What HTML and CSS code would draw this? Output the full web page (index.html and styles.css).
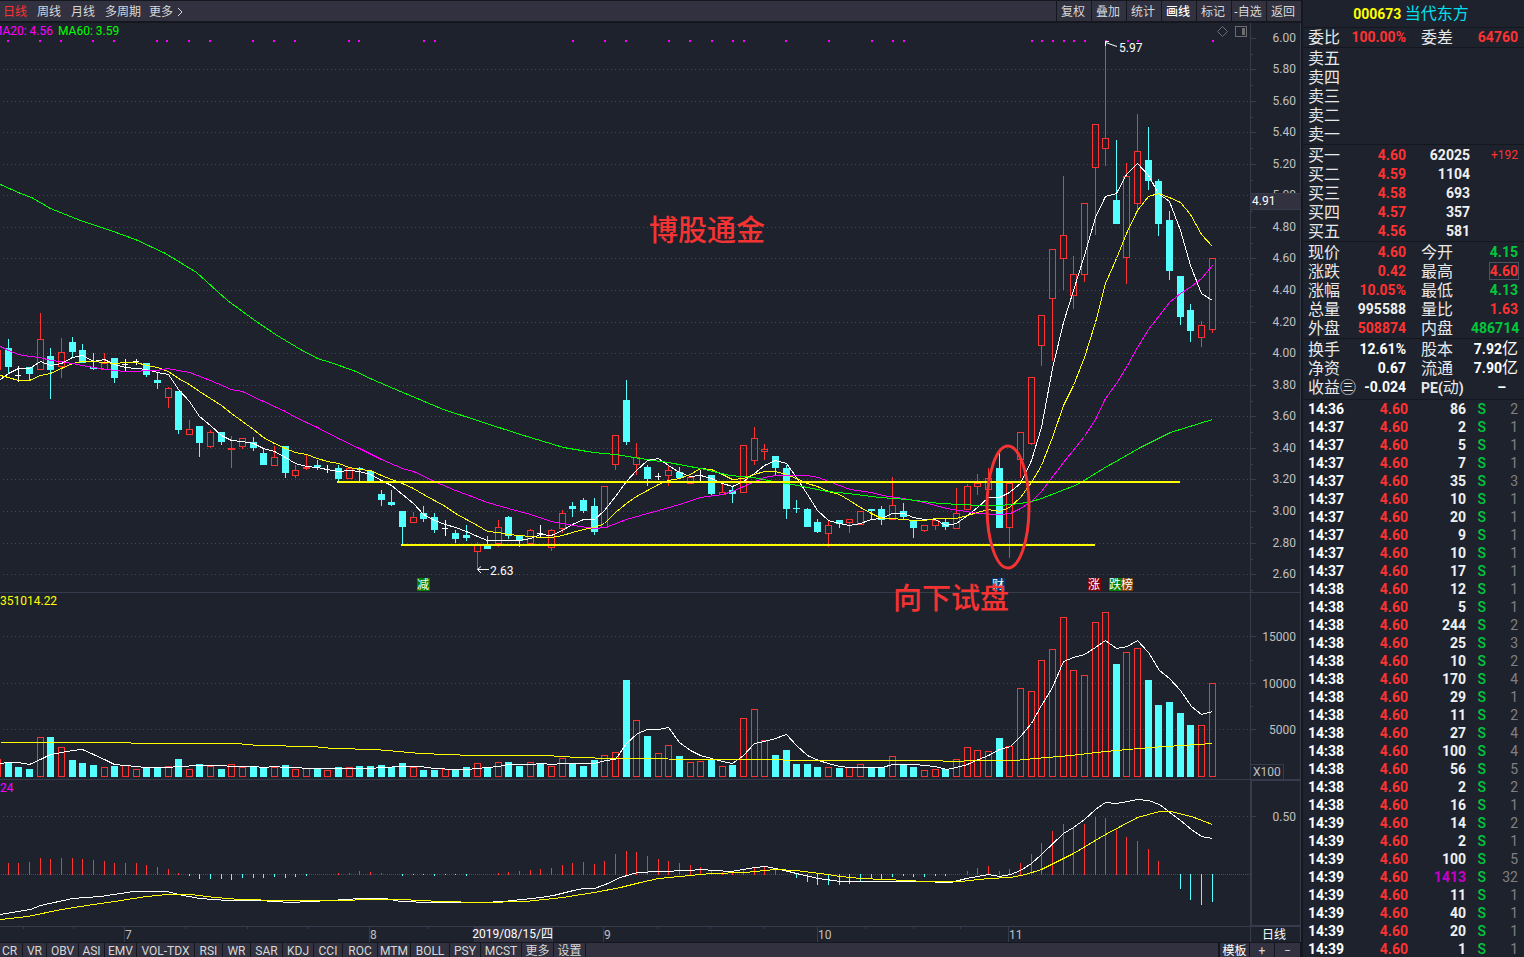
FILE: index.html
```html
<!DOCTYPE html>
<html lang="zh-CN">
<head>
<meta charset="utf-8">
<title>000673 当代东方</title>
<link rel="stylesheet" href="styles.css">
</head>
<body>
<div class="terminal">
  <main class="workspace">
    <header class="topbar">
      <nav class="periods">
        <button class="period period-active">日线</button>
        <button class="period">周线</button>
        <button class="period">月线</button>
        <button class="period">多周期</button>
        <button class="period period-more">更多<svg class="chevron" viewBox="0 0 6 10"><path d="M1 1l4 4-4 4"/></svg></button>
      </nav>
      <div class="tools">
        <button class="tool">复权</button>
        <button class="tool">叠加</button>
        <button class="tool">统计</button>
        <button class="tool tool-active">画线</button>
        <button class="tool">标记</button>
        <button class="tool">-自选</button>
        <button class="tool">返回</button>
      </div>
    </header>

    <svg class="panel panel-price" viewBox="0 23 1301 570">
      <g id="price-grid"></g>
      <path class="axis" d="M1250.5 23V593M1300.5 23V593M0 592.5H1301"/>
      <g id="price-labels"></g>
      <g id="signal-dots"></g>
      <g id="candles"></g>
      <g id="averages"></g>
      <text class="label magenta end" x="53" y="35">MA20: 4.56</text>
      <text class="label green" x="58" y="35">MA60: 3.59</text>
      <path class="icon" d="M1222.500 26.500l5 5-5 5-5-5z"/>
      <rect class="icon" x="1235.500" y="26.500" width="11" height="10" rx="1"/>
      <rect class="icon-fill" x="1242" y="28" width="3" height="7"/>
      <rect class="cursor-box" x="1251" y="193" width="50" height="16"/>
      <path class="axis" d="M1251 193.500H1301M1251 209.500H1301"/>
      <text class="label white" x="1252" y="205">4.91</text>
      <path class="support" d="M337 482H1180M401 545H1095"/>
      <path class="arrow" d="M1117 46.500L1105.500 42.500M1109 41.500H1105.500V46M1107 47"/>
      <text class="label white" x="1119" y="52">5.97</text>
      <path class="arrow" d="M489 569.500H477.500M481 566.500L477.500 569.500L481 573"/>
      <text class="label white" x="490" y="575">2.63</text>
      <rect class="tag-green" x="417" y="578" width="13" height="13"/>
      <text class="tag" x="423" y="589">减</text>
      <rect class="tag-blue" x="992" y="578" width="13" height="13"/>
      <text class="tag" x="998" y="589">财</text>
      <rect class="tag-red" x="1088" y="578" width="13" height="13"/>
      <text class="tag" x="1094" y="589">涨</text>
      <rect class="tag-green" x="1109" y="578" width="12" height="13"/>
      <rect class="tag-brown" x="1121" y="578" width="12" height="13"/>
      <text class="tag" x="1115" y="589">跌</text>
      <text class="tag" x="1127" y="589">榜</text>
      <ellipse class="marker" cx="1008" cy="507" rx="21" ry="61"/>
      <text class="note" x="649" y="241">博股通金</text>
      <text class="note" x="893" y="609">向下试盘</text>
    </svg>

    <svg class="panel" viewBox="0 593 1301 187">
      <path class="grid" d="M3 636.500H1250M3 683.500H1250M3 729.500H1250"/>
      <path class="axis" d="M1250.500 593V780M1300.500 593V780M0 779.500H1301M1251 636.500H1256M1251 683.500H1256M1251 729.500H1256M1251 660.500H1253M1251 706.500H1253M1251 764.500H1283.500V779"/>
      <g id="volumes"></g>
      <g id="volume-lines"></g>
      <text class="label yellow" x="0" y="605">351014.22</text>
      <text class="label end" x="1296" y="641">15000</text>
      <text class="label end" x="1296" y="688">10000</text>
      <text class="label end" x="1296" y="734">5000</text>
      <text class="label" x="1253" y="776">X100</text>
    </svg>

    <svg class="panel" viewBox="0 780 1301 147">
      <path class="grid" d="M3 816.500H1250"/>
      <path class="grid grid-zero" d="M1 874.500H1250"/>
      <path class="axis" d="M1250.500 780V927M0 926.500H1301M1252 816.500H1256"/>
      <rect class="axis" x="1251.500" y="780.500" width="49" height="145"/>
      <g id="macd-bars"></g>
      <g id="macd-lines"></g>
      <text class="label magenta" x="0" y="792">24</text>
      <text class="label end" x="1296" y="821">0.50</text>
    </svg>

    <svg class="panel" viewBox="0 927 1301 15">
      <path class="axis" d="M23.500 927v2M73.500 927v2M185.500 927v2M247.500 927v2M308.500 927v2M428.500 927v2M657.500 927v2M710.500 927v2M764.500 927v2M865.500 927v2M913.500 927v2M960.500 927v2"/>
      <path class="axis" d="M124.500 927v15M369.500 927v15M603.500 927v15M817.500 927v15M1008.500 927v15M1250.500 927v15M1300.500 927v15"/>
      <rect class="cursor-box" x="474" y="927" width="78" height="15"/>
      <path class="axis" d="M474.500 927v15M552.500 927v15"/>
      <text class="label" x="125" y="939">7</text>
      <text class="label" x="370" y="939">8</text>
      <text class="label white end" x="553" y="938">2019/08/15/四</text>
      <text class="label" x="604" y="939">9</text>
      <text class="label" x="818" y="939">10</text>
      <text class="label" x="1009" y="939">11</text>
      <text class="label white" x="1262" y="939">日线</text>
    </svg>

    <footer class="indicators">
      <button>CR</button><button>VR</button><button>OBV</button><button>ASI</button><button>EMV</button><button>VOL-TDX</button><button>RSI</button><button>WR</button><button>SAR</button><button>KDJ</button><button>CCI</button><button>ROC</button><button>MTM</button><button>BOLL</button><button>PSY</button><button>MCST</button><button>更多</button><button>设置</button>
      <span class="filler"></span>
      <button class="bright">模板</button><button>+</button><button>−</button>
    </footer>
  </main>

  <aside class="quote">
    <h1 class="stock"><span class="code">000673</span> <span class="name">当代东方</span></h1>
    <table class="facts">
      <tr><th>委比</th><td class="up">100.00%</td><th>委差</th><td class="up">64760</td></tr>
    </table>
    <table class="depth">
      <tr><th>卖五</th><td></td><td></td><td></td></tr>
      <tr><th>卖四</th><td></td><td></td><td></td></tr>
      <tr><th>卖三</th><td></td><td></td><td></td></tr>
      <tr><th>卖二</th><td></td><td></td><td></td></tr>
      <tr><th>卖一</th><td></td><td></td><td></td></tr>
    </table>
    <table class="depth">
      <tr><th>买一</th><td class="up">4.60</td><td>62025</td><td class="change">+192</td></tr>
      <tr><th>买二</th><td class="up">4.59</td><td>1104</td><td></td></tr>
      <tr><th>买三</th><td class="up">4.58</td><td>693</td><td></td></tr>
      <tr><th>买四</th><td class="up">4.57</td><td>357</td><td></td></tr>
      <tr><th>买五</th><td class="up">4.56</td><td>581</td><td></td></tr>
    </table>
    <table class="facts">
      <tr><th>现价</th><td class="up">4.60</td><th>今开</th><td class="down">4.15</td></tr>
      <tr><th>涨跌</th><td class="up">0.42</td><th>最高</th><td class="up"><span class="limit">4.60</span></td></tr>
      <tr><th>涨幅</th><td class="up">10.05%</td><th>最低</th><td class="down">4.13</td></tr>
      <tr><th>总量</th><td>995588</td><th>量比</th><td class="up">1.63</td></tr>
      <tr><th>外盘</th><td class="up">508874</td><th>内盘</th><td class="down">486714</td></tr>
    </table>
    <table class="facts facts-last">
      <tr><th>换手</th><td>12.61%</td><th>股本</th><td>7.92<span class="unit">亿</span></td></tr>
      <tr><th>净资</th><td>0.67</td><th>流通</th><td>7.90<span class="unit">亿</span></td></tr>
      <tr><th>收益㊂</th><td>-0.024</td><th><b>PE(</b>动<b>)</b></th><td class="none">–</td></tr>
    </table>
    <table class="ticks"><tbody id="ticks"></tbody></table>
  </aside>
</div>
<script src="chart.js"></script>
</body>
</html>
```

FILE: styles.css
```css
* { box-sizing: border-box; }

body {
  margin: 0;
  background: #1d222c;
  color: #c0c0c0;
  font-family: Roboto, "Liberation Sans", "Noto Sans CJK SC", sans-serif;
  font-size: 12px;
  overflow: hidden;
}

button {
  margin: 0;
  padding: 0;
  border: 0;
  background: none;
  color: #d8d8d8;
  font: inherit;
  white-space: nowrap;
}

.terminal {
  display: grid;
  grid-template-columns: minmax(0, 1fr) 223px;
  height: 100vh;
}

.workspace {
  display: flex;
  flex-direction: column;
  min-width: 0;
  overflow: hidden;
}

/* top bar */
.topbar {
  display: flex;
  flex: none;
  justify-content: space-between;
  height: 23px;
  border-top: 1px solid #14171e;
  border-bottom: 2px solid #14171e;
  background: #31313f;
}
.periods { display: flex; gap: 10px; padding-left: 3px; }
.period { padding-top: 2px; line-height: 18px; }
.period-more { display: flex; align-items: center; gap: 4px; margin-left: -2px; }
.period-active { color: #ff3232; }
.chevron { width: 6px; height: 10px; fill: none; stroke: #d8d8d8; }
.tools { display: flex; }
.tool { width: 35px; padding: 2px 2px 0 0; line-height: 18px; border-left: 1px solid #14171e; }
.tool-active { color: #fff; font-weight: 500; }

/* chart panels */
.panel { display: block; flex: none; width: 100%; height: auto; }
.panel-price { position: relative; z-index: 1; overflow: visible; }
.panel rect, .axis, .grid { shape-rendering: crispEdges; }
.axis { fill: none; stroke: #363c4b; }
.grid { fill: none; stroke: #454a59; stroke-dasharray: 1 3; }
.grid-zero { stroke-dasharray: 1 1; }
.label { fill: #c0c0c0; font-size: 12px; }
.end { text-anchor: end; }
.label.white { fill: #fff; }
.label.yellow { fill: #ff0; }
.label.magenta { fill: #f0f; }
.label.green { fill: #0f0; }
.line { fill: none; shape-rendering: crispEdges; }
.line-white { stroke: #fff; }
.line-yellow { stroke: #ff0; }
.line-magenta { stroke: #f0f; }
.line-green { stroke: #0f0; }
.dot { fill: #f0f; }
.rise { fill: none; stroke: #ff3232; }
.fall { fill: #54ffff; }
.rise-wick { fill: #ff3232; }
.flat { fill: #fff; }
.icon { fill: none; stroke: #6b6b70; }
.icon-fill { fill: #6b6b70; }
.cursor-box { fill: #31313f; }
.support { stroke: #ff0; stroke-width: 2; shape-rendering: crispEdges; }
.arrow { fill: none; stroke: #fff; }
.marker { fill: none; stroke: #f53333; stroke-width: 3; }
.note { fill: #f53333; font-size: 29px; font-weight: 500; }
.tag { fill: #fff; font-size: 12px; text-anchor: middle; }
.tag-green { fill: #008000; }
.tag-blue { fill: #003c70; }
.tag-red { fill: #800000; }
.tag-brown { fill: #804000; }

/* indicator bar */
.indicators {
  display: grid;
  flex: 1 0 15px;
  grid-template-columns: 23px 24px 32px 26px 32px 58px 28px 28px 32px 31px 29px 35px 33px 39px 31px 41px 32px 32px minmax(0, 1fr) 30px 25px 26px;
  border-top: 1px solid #14171e;
  background: #31313f;
}
.indicators button { padding-top: 2px; border-right: 1px solid #14171e; line-height: 12px; text-align: center; }
.indicators button:first-child { padding-right: 3px; }
.indicators .filler { border-right: 2px solid #14171e; }
.indicators .bright { color: #fff; }

/* quote column */
.quote {
  border-left: 2px solid #14171e;
  overflow: hidden;
}
.stock {
  margin: 0;
  height: 27px;
  padding-right: 5px;
  font-size: 14px;
  line-height: 28px;
  text-align: center;
}
.code { color: #ff0; }
.name { color: #00e0f0; font-size: 16px; font-weight: 400; }
.quote table {
  width: 100%;
  table-layout: fixed;
  border-collapse: separate;
  border-spacing: 0;
  border-top: 1px solid #14171e;
  padding: 0 6px 0 5px;
}
.quote td, .quote th { height: 19px; padding: 0; line-height: 19px; white-space: nowrap; }
.quote th { color: #e8e8e8; font-size: 16px; font-weight: 400; text-align: left; }
.quote td { color: #f0f0f0; font-size: 14px; font-weight: 700; text-align: right; }
.quote table + .depth, .quote .depth + .facts { padding-top: 1px; }
.facts th:nth-child(1) { width: 40px; }
.facts td:nth-child(2) { width: 58px; }
.quote .facts th:nth-child(3) { width: 65px; padding-left: 15px; }
.depth th { width: 47px; }
.depth td:nth-child(2) { width: 51px; }
.depth td:nth-child(3) { width: 64px; }
.quote .facts-last { padding-top: 1px; padding-bottom: 2px; }
.quote .facts-last td { color: #fff; }
.facts-last b { font-size: 14px; line-height: 0; }
.quote .up { color: #ff3232; }
.quote .down { color: #00c83c; }
.quote .change { color: #ff3232; font-size: 12px; font-weight: 400; }
.limit { outline: 1px solid #4a5464; }
.unit { font-size: 16px; font-weight: 400; line-height: 0; }
.quote .none { padding-right: 12px; }
.quote .ticks td { height: 18px; line-height: 18px; }
.quote .ticks td:nth-child(1) { width: 47px; text-align: left; color: #fff; }
.quote .ticks td:nth-child(2) { width: 53px; color: #ff3232; }
.quote .ticks td:nth-child(3) { width: 58px; }
.quote .ticks td:nth-child(4) { width: 20px; color: #00c83c; font-weight: 500; }
.quote .ticks td:nth-child(5) { color: #808080; font-weight: 400; }
.quote .ticks .large { color: #c800c8; }
```

FILE: chart.js
```js
const NS = 'http://www.w3.org/2000/svg';
const byId = (id) => document.getElementById(id);
const xAt = (i) => Math.floor(8.2 + 10.655 * i);

function add(parent, tag, attrs, text) {
  const el = document.createElementNS(NS, tag);
  for (const key in attrs) el.setAttribute(key, attrs[key]);
  if (text !== undefined) el.textContent = text;
  parent.appendChild(el);
}
function box(parent, cls, x, y, width, height) {
  add(parent, 'rect', { class: cls, x, y, width, height: Math.max(height, 1) });
}
function line(parent, color, points) {
  const d = points.map((p) => (p[0] + 0.5) + ',' + (p[1] + 0.5)).join(' ');
  add(parent, 'polyline', { class: 'line line-' + color, points: d });
}
const pairs = (text) => text.trim().split(/\s+/).map((p) => p.split(',').map(Number));
const series = (first, text) => [[0, first]].concat(text.trim().split(/\s+/).map((y, i) => [xAt(i), Number(y)]));

/* price scale */
for (let k = 0; k < 18; k++) {
  const y = Math.floor(38 + 31.57 * k);
  if (k > 0) add(byId('price-grid'), 'path', { class: 'grid', d: `M3 ${y + 0.5}H1250` });
  add(byId('price-grid'), 'path', { class: 'axis', d: `M1251 ${y + 0.5}h5M1251 ${y + 16.5}h2` });
  add(byId('price-labels'), 'text', { class: 'label end', x: 1296, y: y + 4 }, (6 - 0.2 * k).toFixed(2));
}

for (const x of [7, 39, 60, 92, 113, 156, 166, 188, 209, 252, 273, 294, 348, 358, 423, 434, 572, 604, 625, 668, 689, 711, 732, 743, 785, 828, 871, 892, 903, 1031, 1041, 1052, 1063, 1073, 1084, 1105, 1127, 1137, 1212]) {
  box(byId('signal-dots'), 'dot', x, 40, 2, 2);
}

/* kind, high, body top, body bottom, low; starts one bar left of the view */
const candles = `
r,350,350,370,370 c,339,348,367,374 x,366,375,376,382 c,367,367,374,380 r,313,339,370,370 c,348,356,370,399
r,338,352,367,378 c,337,342,352,357 c,344,350,363,363 c,353,367,369,370 r,353,363,370,370 c,358,358,378,383
x,359,364,365,371 x,359,361,362,365 c,363,363,375,377 c,373,380,383,389 r,387,388,398,408 c,391,391,430,434
r,420,429,435,435 c,426,426,443,457 r,430,432,447,448 c,432,432,442,445 r,436,448,450,468 r,438,438,447,449
c,437,442,448,451 c,449,453,465,465 r,446,457,466,466 c,446,446,473,478 r,465,470,476,478 r,454,467,469,470
c,460,465,467,470 x,465,469,470,473 c,465,468,479,481 r,467,468,479,479 c,467,468,469,481 c,471,471,482,482
c,490,494,500,506 c,490,502,505,506 c,511,511,527,544 r,512,517,523,523 c,506,513,519,522 c,513,517,530,533
x,520,528,529,536 c,530,533,539,543 c,525,535,538,541 r,542,545,552,569 c,536,546,549,549 r,520,527,544,547
c,516,517,536,539 c,536,536,541,547 r,529,530,544,544 x,525,533,534,537 r,529,530,548,551 r,510,513,529,533
c,502,506,509,517 c,498,500,511,513 c,498,506,532,535 r,486,486,528,528 r,435,435,465,470 c,380,400,442,445
r,443,457,465,475 c,465,467,479,486 x,473,476,477,480 r,466,470,476,486 c,467,472,478,479 r,477,477,484,484
x,470,475,476,482 c,475,475,494,495 r,483,492,495,495 c,486,490,494,503 r,445,445,493,493 r,427,438,461,465
r,444,449,452,460 c,456,456,468,475 c,465,468,509,519 c,500,508,509,513 c,508,509,527,527 c,519,522,532,533
r,520,525,534,547 c,520,520,524,528 r,519,519,523,533 r,511,511,525,525 c,509,509,511,519 c,506,509,520,525
r,477,505,520,520 c,503,511,517,520 c,520,520,528,538 r,525,525,531,532 r,520,520,526,530 c,519,522,527,530
r,488,513,529,529 r,484,486,510,510 r,474,483,487,495 r,468,478,490,493 c,453,468,528,528 r,483,483,528,558
r,432,432,460,478 r,377,377,444,445 r,315,315,346,366 r,249,249,299,361 r,176,235,259,290 r,256,274,296,309
r,203,203,275,282 r,124,124,168,235 r,42,138,149,166 c,140,200,224,224 r,163,176,258,284 r,114,151,204,212
c,127,160,181,190 c,179,181,224,236 c,211,220,271,280 c,276,276,317,325 c,304,310,331,342 r,321,325,338,347
r,258,258,330,333`.trim().split(/\s+/).map((c) => c.split(','));

candles.forEach(([kind, high, top, bottom, low], n) => {
  const g = byId('candles');
  const x = xAt(n - 1);
  [high, top, bottom, low] = [high, top, bottom, low].map(Number);
  if (kind === 'r') {
    if (top > high) box(g, 'rise-wick', x, high, 1, top - high);
    if (low > bottom) box(g, 'rise-wick', x, bottom, 1, low - bottom);
    box(g, 'rise', x - 2.5, top + 0.5, 6, bottom - top - 1);
  } else {
    const cls = kind === 'c' ? 'fall' : 'flat';
    box(g, cls, x, high, 1, low - high);
    box(g, cls, x - 3, top, kind === 'c' ? 7 : 6, bottom - top);
  }
});

line(byId('averages'), 'white', series(379, `
373 368 368 361 365 363 357 355 361 359 364 367 368 369 372 374 389 401 416 425 435 440 441 443 448 451 457 463 466 467 469
471 470 471 474 480 485 494 503 514 520 524 527 531 536 540 540 540 540 538 534 535 530 524 519 519 510 496 481 470 460
458 465 472 476 475 478 483 486 481 473 465 460 463 477 494 510 520 523 525 523 519 518 513 513 517 519 519 525 523 515
507 497 497 492 483 460 427 368 322 290 255 217 196 193 174 163 175 193 201 230 265 293 300`));
line(byId('averages'), 'yellow', series(375, `
377 380 380 375 373 368 363 361 361 362 363 362 362 365 367 371 378 384 391 398 405 413 421 429 437 443 448 452 454 458 461
463 467 469 470 475 479 483 488 494 500 506 513 519 525 531 532 534 535 536 537 537 535 532 529 527 523 512 503 496 490
484 480 478 474 468 469 474 479 478 474 471 471 474 478 483 486 491 494 500 507 513 518 518 519 520 520 518 518 518 515
512 509 511 507 497 482 465 437 405 385 357 322 283 258 233 210 196 193 197 202 214 234 246`));
line(byId('averages'), 'magenta', pairs(`
0,346 8,350 18,354 29,356 40,357 50,360 61,361 82,365 93,367 114,370 125,371 157,370 167,368 189,372 210,380 231,389 242,391
263,401 285,411 295,417 317,427 338,438 359,448 381,459 402,468 413,471 434,481 455,490 466,494 487,502 508,508 530,514
551,521 573,525 594,528 605,527 626,519 647,513 658,510 679,504 700,497 722,494 732,491 743,486 764,477 775,475 807,475
818,477 828,481 850,489 871,492 882,495 903,498 924,502 946,508 978,513 999,514 1010,513 1020,508 1031,501 1041,491
1063,462 1084,436 1095,419 1105,398 1116,383 1127,365 1137,347 1148,329 1159,315 1169,302 1180,293 1191,286 1201,278 1212,265`));
line(byId('averages'), 'green', pairs(`
0,184 20,193 31,197 50,208 80,220 110,230 135,239 165,253 196,272 227,300 253,319 275,334 300,349 317,358 330,362 353,370
372,379 400,391 443,409 520,434 563,447 593,452 615,454 633,457 660,461 668,462 700,468 730,475 753,477 773,481 797,485
827,491 847,493 880,497 907,499 940,503 980,505 999,505 1020,503 1031,501 1041,498 1077,484 1103,468 1140,447 1170,432 1212,419`));

/* volume: kind and top edge, base at 776 */
const volumes = `
r759 c763 c767 c769 r737 c737 r747 c760 c763 c765 r767 c766 r765 r769 c768 c768 r766 c759 r769 c764 r766 c769 r764 r767 c767
c768 r767 c765 r769 r768 c769 r770 c767 r767 c766 c766 c765 c767 c763 r767 c770 c770 r769 c770 c767 r763 c767 r762 c762 c766
r762 c764 r766 r758 c764 c766 c760 r755 r752 c680 r720 c736 r753 r745 c756 r762 r761 c760 r766 c765 r718 r709 r740 c755 c750
c764 c764 c767 r767 c768 r767 r764 c767 c767 r756 c765 c767 r770 r769 c769 r759 r747 r750 r751 c738 r746 r688 r691 r660 r649
r617 r670 r675 r622 r612 c664 r652 r648 c680 c705 c702 c713 c725 r725 r683`.trim().split(/\s+/);
volumes.forEach((v, n) => {
  const x = xAt(n - 1);
  const top = Number(v.slice(1));
  if (v[0] === 'c') box(byId('volumes'), 'fall', x - 3, top, 7, 777 - top);
  else box(byId('volumes'), 'rise', x - 2.5, top + 0.5, 6, 776 - top);
});
line(byId('volume-lines'), 'white', pairs(`
0,763 8,762 18,762 29,764 40,759 50,754 61,752 72,750 82,749 93,754 104,759 114,764 125,765 135,766 146,767 167,767 178,766
199,765 221,765 231,766 253,766 263,767 274,766 285,767 317,768 370,768 381,767 402,766 420,766 434,768 455,769 466,769
487,767 498,766 508,764 530,764 541,763 551,764 562,763 594,763 605,760 615,759 626,743 637,733 647,729 658,729 668,727
679,742 690,750 700,755 711,758 722,761 732,763 743,755 754,743 764,741 775,738 786,734 796,745 807,755 818,760 828,763
839,766 850,767 882,767 892,764 914,764 935,766 946,769 956,767 967,764 978,759 988,755 999,749 1010,746 1020,736 1031,723
1041,705 1052,687 1063,661 1073,657 1084,654 1095,647 1105,640 1116,648 1127,646 1137,640 1148,652 1159,670 1169,678
1180,690 1191,706 1201,714 1212,711`));
line(byId('volume-lines'), 'yellow', pairs(`
0,742 130,742 131,743 236,743 258,745 312,746 333,748 375,749 398,751 420,753 472,755 545,755 578,757 610,758 725,759
840,760 940,760 945,761 962,761 965,760 1015,760 1035,758 1070,755 1105,751 1150,747 1212,743`));

/* MACD histogram tips around the zero line at 874 */
const tips = `
863 863 862 858 859 858 858 859 860 861 863 863 863 865 867 869 873 876 879 879 879 880 878 878 878 877 878 877 876 874 874
873 873 871 872 873 874 876 875 875 876 875 875 876 874 874 873 872 871 870 869 868 865 863 862 864 861 854 851 852 856 859
861 863 865 867 870 872 873 870 867 867 869 874 878 882 885 885 885 884 881 878 879 877 876 877 877 876 876 874 871 868 866
871 869 863 854 843 831 824 827 824 817 818 830 837 841 849 861 874 889 900 905 902`.trim().split(/\s+/).map(Number);
tips.forEach((tip, i) => {
  if (tip < 874) box(byId('macd-bars'), 'rise-wick', xAt(i), tip, 1, 875 - tip);
  if (tip > 874) box(byId('macd-bars'), 'fall', xAt(i), 874, 1, tip - 874);
});
line(byId('macd-lines'), 'white', pairs(`
0,914 30,909 40,905 72,898 100,896 133,891 167,891 178,894 199,898 227,900 258,900 290,902 310,901 330,900 360,898 385,898
400,901 430,902 482,902 503,901 540,897 553,895 573,890 583,888 594,888 605,884 620,877 637,872 658,871 690,870 700,869
730,871 755,867 765,866 780,869 800,874 818,878 840,881 918,881 950,882 966,878 988,874 999,876 1010,874 1020,870 1031,863
1041,854 1063,833 1073,827 1084,819 1095,809 1105,802 1116,803 1127,801 1137,799 1148,800 1159,804 1180,820 1191,829
1201,836 1212,838`));
line(byId('macd-lines'), 'yellow', pairs(`
0,919 27,916 61,909 93,904 114,901 146,896 167,894 190,894 215,897 240,899 280,900 340,900 370,899 400,899 440,901 480,902
525,901 562,897 594,892 620,887 640,882 658,878 679,876 711,873 745,872 775,869 795,870 820,873 840,876 860,878 885,879
925,881 960,881 988,878 1010,877 1025,874 1041,869 1073,853 1105,834 1137,817 1159,811 1170,811 1191,816 1212,824`));

/* trade ticks: time, lots, orders */
const ticks = `
14:36,86,2 14:37,2,1 14:37,5,1 14:37,7,1 14:37,35,3 14:37,10,1 14:37,20,1 14:37,9,1 14:37,10,1 14:37,17,1 14:38,12,1
14:38,5,1 14:38,244,2 14:38,25,3 14:38,10,2 14:38,170,4 14:38,29,1 14:38,11,2 14:38,27,4 14:38,100,4 14:38,56,5 14:38,2,2
14:38,16,1 14:39,14,2 14:39,2,1 14:39,100,5 14:39,1413,32 14:39,11,1 14:39,40,1 14:39,20,1 14:39,1,1`;
for (const tick of ticks.trim().split(/\s+/)) {
  const [time, lots, orders] = tick.split(',');
  const row = byId('ticks').insertRow();
  for (const text of [time, '4.60', lots, 'S', orders]) row.insertCell().textContent = text;
  if (Number(lots) > 1000) row.cells[2].className = 'large';
}
```
